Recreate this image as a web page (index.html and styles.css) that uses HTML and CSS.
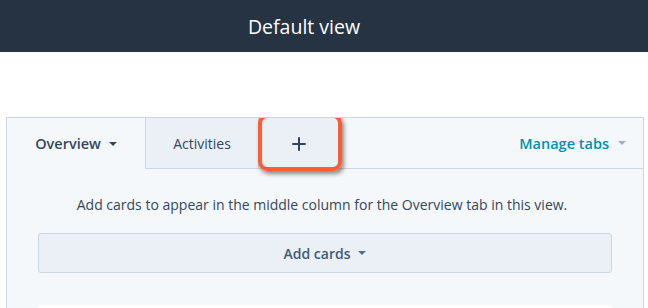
FILE: index.html
```html
<!DOCTYPE html>
<html>
<head>
<meta charset="utf-8">
<link rel="stylesheet" href="styles.css">
</head>
<body>
<header class="topbar">Default view</header>
<section class="panel">
  <nav class="tabs">
    <div class="tab tab-active">Overview <span class="caret caret-dark"></span></div>
    <div class="tab tab-inactive">Activities</div>
    <div class="tab tab-add">
      <svg class="plus" width="14" height="14" viewBox="0 0 14 14"><path d="M7 1v12M1 7h12" stroke="#33475b" stroke-width="2" stroke-linecap="round"/></svg>
      <span class="highlight"></span>
    </div>
    <div class="tab-fill">
      <span class="manage">Manage tabs</span><span class="caret caret-grey"></span>
    </div>
  </nav>
  <div class="content">
    <p class="hint">Add cards to appear in the middle column for the Overview tab in this view.</p>
    <button class="add-btn">Add cards <span class="caret caret-btn"></span></button>
    <div class="card"></div>
  </div>
</section>
</body>
</html>
```
FILE: styles.css
```css
* { box-sizing: border-box; }
html, body { margin: 0; padding: 0; background: #fff; overflow: hidden; }
body { font-family: "Open Sans", "Lato", sans-serif; color: #33475b; width: 648px; height: 308px; }

.topbar {
  height: 52px;
  background: #253342;
  color: #fff;
  font-size: 19.5px;
  display: flex;
  align-items: center;
  justify-content: center;
  padding-right: 40px;
}

.panel {
  margin: 65px 4px 0 6px;
  border: 1px solid #cbd6e2;
  border-bottom: none;
  background: #f5f8fa;
  height: 191px;
  overflow: hidden;
}

.tabs {
  display: flex;
  height: 51px;
}
.tab {
  display: flex;
  align-items: center;
  justify-content: center;
  font-size: 14px;
}
.tab-active {
  width: 138px;
  font-weight: 600;
  font-size: 14.5px;
}
.tab-inactive {
  width: 113px;
  background: #eaf0f6;
  border-left: 1px solid #cbd6e2;
  border-bottom: 1px solid #cbd6e2;
  color: #33475b;
}
.tab-add {
  position: relative;
  width: 80px;
  background: #eaf0f6;
  border-left: 1px solid #cbd6e2;
  border-bottom: 1px solid #cbd6e2;
}
.plus { margin-top: 1px; }
.highlight {
  position: absolute;
  left: -1px;
  right: -4px;
  top: -4px;
  bottom: -3px;
  border: 4px solid #ff5c35;
  border-radius: 9px;
  box-shadow: 2px 3px 4px rgba(0,0,0,0.45);
}
.tab-fill {
  flex: 1;
  display: flex;
  align-items: center;
  justify-content: flex-end;
  border-bottom: 1px solid #cbd6e2;
  padding-right: 17px;
}
.manage {
  color: #0091ae;
  font-weight: 600;
  font-size: 14.5px;
}
.caret {
  display: inline-block;
  width: 0; height: 0;
  border-left: 4px solid transparent;
  border-right: 4px solid transparent;
  border-top: 4px solid #33475b;
}
.caret-dark { margin-left: 8px; }
.caret-grey { margin-left: 9px; border-top-color: #99afc4; }
.caret-btn { margin-left: 8px; border-top-color: #506e91; }

.content {
  padding: 0 31px 0 31px;
}
.hint {
  margin: 26px 0 0;
  padding-right: 6px;
  text-align: center;
  font-size: 14px;
  line-height: 20px;
}
.add-btn {
  display: flex;
  align-items: center;
  justify-content: center;
  width: 100%;
  height: 40px;
  margin-top: 18px;
  background: #eaf0f6;
  border: 1px solid #cbd6e2;
  border-radius: 3px;
  font-family: inherit;
  font-size: 14px;
  font-weight: 600;
  color: #425b76;
}
.card {
  margin-top: 32px;
  height: 3px;
  background: #fff;
  border-radius: 3px 3px 0 0;
}
```
